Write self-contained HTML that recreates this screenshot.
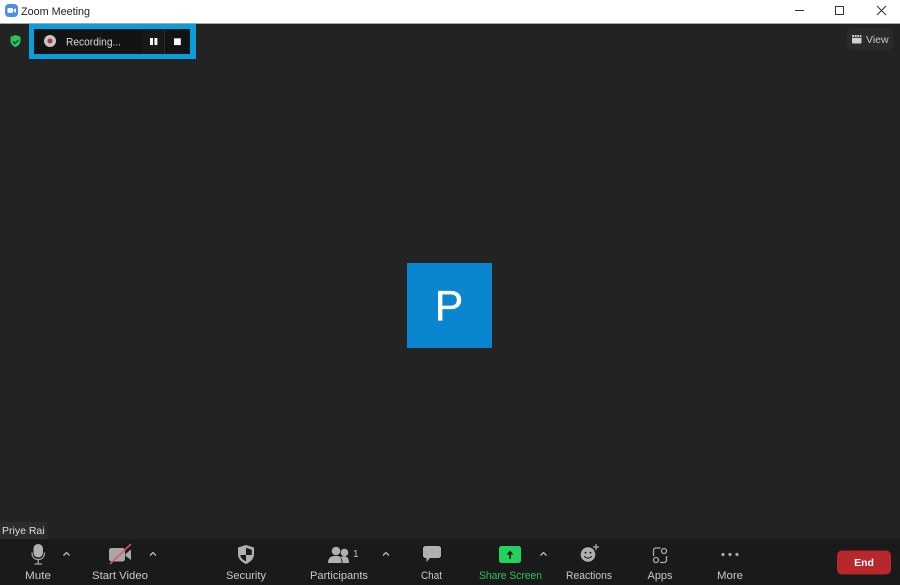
<!DOCTYPE html>
<html><head><meta charset="utf-8"><style>
html,body{margin:0;padding:0;width:900px;height:585px;overflow:hidden;background:#232323}
svg{position:absolute;left:0;top:0}
text{font-family:"Liberation Sans",sans-serif}
</style></head><body>
<svg width="900" height="585" viewBox="0 0 900 585">
<rect width="900" height="585" fill="#232323"/>
<!-- title bar -->
<rect width="900" height="23" fill="#fff"/>
<rect y="23" width="900" height="1" fill="#a8a8a8"/>
<rect x="5" y="4" width="13" height="13" rx="4" fill="#4a8cf0"/>
<rect x="7.500" y="8" width="5.500" height="5" rx="1" fill="#fff"/>
<path d="M13.500 10l2.500-2v5l-2.500-2z" fill="#fff"/>
<text x="21" y="15" font-size="11" fill="#222" textLength="69" lengthAdjust="spacingAndGlyphs">Zoom Meeting</text>
<path d="M795 10.500h9" stroke="#333" stroke-width="1"/>
<rect x="835.500" y="6.500" width="8" height="8" fill="none" stroke="#333"/>
<path d="M877 6l9 9M886 6l-9 9" stroke="#333" stroke-width="1" fill="none"/>
<!-- shield -->
<path d="M15.500 35l5 1.800v4c0 3.200-2.300 5.200-5 6.400-2.700-1.200-5-3.200-5-6.400v-4z" fill="#25c65b"/>
<path d="M13 41.500l2 2 3.300-3.300" stroke="#0d3b1c" stroke-width="1.300" fill="none"/>
<!-- recording box -->
<rect x="29" y="24" width="167" height="35" fill="#0a9ddb"/>
<rect x="34" y="29" width="156" height="25" fill="#131313"/>
<rect x="142" y="29" width="22" height="25" fill="#181818"/>
<rect x="164" y="29" width="1" height="25" fill="#2c2c2c"/>
<circle cx="50" cy="41" r="6" fill="#c4c4c4"/>
<circle cx="50" cy="41" r="2.500" fill="#b8303a"/>
<text x="66" y="45.500" font-size="11" fill="#d8d8d8" textLength="55" lengthAdjust="spacingAndGlyphs">Recording...</text>
<rect x="150" y="38" width="3" height="7" fill="#f6f6f6"/>
<rect x="154.400" y="38" width="3" height="7" fill="#f6f6f6"/>
<rect x="174" y="38.300" width="6.800" height="6.800" fill="#fafafa"/>
<!-- view -->
<rect x="847" y="28" width="46" height="22" rx="5" fill="#2a2a2a"/>
<rect x="852" y="35" width="9.500" height="8.500" rx="1" fill="#d0d0d0"/>
<path d="M852 37.500h9.500" stroke="#2a2a2a" stroke-width="0.800"/>
<path d="M854.500 35v2.500M857 35v2.500M859.500 35v2.500" stroke="#2a2a2a" stroke-width="0.700"/>
<text x="866" y="43" font-size="10.500" fill="#c8c8c8">View</text>
<!-- avatar -->
<rect x="407" y="263" width="85" height="85" fill="#0a85d0"/>
<text x="449" y="320.500" font-size="43" fill="#fff" text-anchor="middle" stroke="#fff" stroke-width="0.300">P</text>
<!-- name -->
<rect x="0" y="522" width="47" height="17" fill="#2c2c2c"/>
<text x="2" y="534" font-size="10.500" fill="#dedede">Priye Rai</text>
<!-- toolbar -->
<rect y="539" width="900" height="46" fill="#1a1a1a"/>
<g fill="#c9c9c9" font-size="11">
<text x="25" y="579" textLength="26" lengthAdjust="spacingAndGlyphs">Mute</text>
<text x="92" y="579" textLength="56" lengthAdjust="spacingAndGlyphs">Start Video</text>
<text x="226" y="579" textLength="40" lengthAdjust="spacingAndGlyphs">Security</text>
<text x="310" y="579" textLength="58" lengthAdjust="spacingAndGlyphs">Participants</text>
<text x="421" y="579" textLength="21" lengthAdjust="spacingAndGlyphs">Chat</text>
<text x="479" y="579" fill="#27c45e" textLength="63" lengthAdjust="spacingAndGlyphs">Share Screen</text>
<text x="566" y="579" textLength="46" lengthAdjust="spacingAndGlyphs">Reactions</text>
<text x="647.500" y="579" textLength="25" lengthAdjust="spacingAndGlyphs">Apps</text>
<text x="717" y="579" textLength="26" lengthAdjust="spacingAndGlyphs">More</text>
</g>
<!-- mic -->
<rect x="33.500" y="544" width="9.500" height="13.500" rx="4.700" fill="#b0b0b0"/>
<path d="M32 552.500c0 4.500 2.500 7 6.250 7s6.250-2.500 6.250-7M38.250 559.500v4M34.500 564h7.500" stroke="#a6a6a6" stroke-width="1.300" fill="none"/>
<!-- carets -->
<g stroke="#bdbdbd" stroke-width="1.300" fill="none">
<path d="M63.500 555.500l3-3 3 3M150 555.500l3-3 3 3M383 555.500l3-3 3 3M540.500 555.500l3-3 3 3"/>
</g>
<!-- video -->
<rect x="109" y="548" width="16" height="13.500" rx="2.500" fill="#a8a8a8"/>
<path d="M125.500 554l5.500-4.500v10.500l-5.500-4z" fill="#a8a8a8"/>
<path d="M110 564l21-20" stroke="#e8505a" stroke-width="1.500"/>
<!-- security -->
<path d="M246 545l8 2.500v6.500c0 5-3.500 8-8 10-4.500-2-8-5-8-10v-6.500z" fill="#b0b0b0"/>
<path d="M246 547.800v7.200h5.800v-5.300zM246 555v6.500c-2.800-1.500-5.500-3.500-5.700-6.500z" fill="#1a1a1a"/>
<!-- participants -->
<circle cx="336" cy="551" r="4.300" fill="#b0b0b0"/>
<circle cx="344.500" cy="552.500" r="3.800" fill="#b0b0b0"/>
<path d="M328 563c0-4.500 2.500-7 6-7h4c2.500 0 3.500 3 3.500 7z" fill="#b0b0b0"/>
<path d="M342.500 563c0-2.500-.5-4.500-2-6 1-.5 2.500-.7 4-.7 3 0 4.500 2.500 4.500 6.700z" fill="#b0b0b0"/>
<text x="353" y="557" font-size="10" fill="#c0c0c0">1</text>
<!-- chat -->
<path d="M426 546h12c2 0 3 1 3 3v6c0 2-1 3-3 3h-8l-3.500 4v-4c-2.500 0-3.500-1-3.500-3v-6c0-2 1-3 3-3z" fill="#b0b0b0"/>
<!-- share -->
<rect x="499" y="546" width="22" height="17" rx="2.500" fill="#23d160"/>
<path d="M510 559v-6" stroke="#06220f" stroke-width="1.800" fill="none"/>
<path d="M506.500 554.500l3.500-4 3.500 4z" fill="#06220f"/>
<!-- reactions -->
<circle cx="588" cy="554.500" r="7.300" fill="#b0b0b0"/>
<circle cx="585.500" cy="552.800" r="1" fill="#1a1a1a"/>
<circle cx="590.500" cy="552.800" r="1" fill="#1a1a1a"/>
<path d="M584.500 556c1 2.800 6 2.800 7 0" stroke="#1a1a1a" stroke-width="1.100" fill="none"/>
<path d="M596 544v6M593 547h6" stroke="#b0b0b0" stroke-width="1.200"/>
<!-- apps -->
<path d="M653.500 556v-5.500c0-1.500 1-2.500 2.500-2.500h4.500M666.500 556v4c0 1.500-1 2.500-2.500 2.500h-4" stroke="#ababab" stroke-width="1.300" fill="none"/>
<circle cx="664" cy="551" r="2.500" stroke="#ababab" stroke-width="1.300" fill="none"/>
<circle cx="656" cy="560" r="2.500" stroke="#ababab" stroke-width="1.300" fill="none"/>
<!-- more -->
<circle cx="723" cy="554.500" r="1.600" fill="#ababab"/>
<circle cx="730" cy="554.500" r="1.600" fill="#ababab"/>
<circle cx="737" cy="554.500" r="1.600" fill="#ababab"/>
<!-- end -->
<rect x="837" y="550.500" width="54" height="24" rx="5" fill="#b8272c"/>
<text x="864" y="566" font-size="10.500" font-weight="bold" fill="#fff" text-anchor="middle">End</text>
</svg>
</body></html>
